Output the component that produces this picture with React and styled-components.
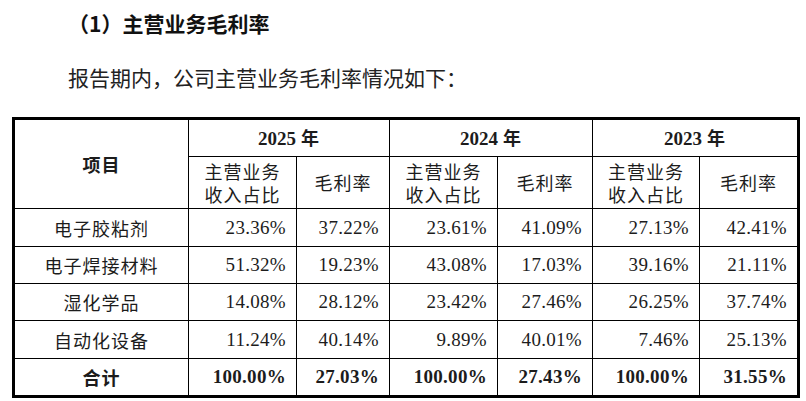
import React from "react";
import styled, { createGlobalStyle } from "styled-components";

const Global = createGlobalStyle`
  html, body { margin: 0; padding: 0; background: #fff; }
  body { font-family: "Noto Sans CJK SC", sans-serif; color: #1c1c1c; }
`;

const Page = styled.div`
  width: 806px;
  height: 401px;
  overflow: hidden;
  padding: 0 9px 0 12px;
  box-sizing: border-box;
`;

const Title = styled.h2`
  margin: 0;
  padding: 8px 0 0 56px;
  height: 46px;
  box-sizing: border-box;
  font-size: 21px;
  line-height: 30px;
  font-weight: 700;
  color: #111;
  font-family: "Noto Sans CJK SC", sans-serif;
`;

const Para = styled.p`
  margin: 0;
  padding: 16px 0 0 56px;
  height: 71px;
  box-sizing: border-box;
  font-size: 21px;
  line-height: 30px;
  font-weight: 400;
  color: #222;
`;

const Table = styled.table`
  border-collapse: collapse;
  table-layout: fixed;
  width: 785px;
  border: 3px solid #000;
`;

const Cell = styled.td`
  border: 1px solid #000;
  padding: 0 ${(p) => (p.$num ? "10px" : "0")} 0 0;
  text-align: ${(p) => (p.$num ? "right" : "center")};
  vertical-align: middle;
  font-family: ${(p) =>
    p.$num ? '"Liberation Serif", "Times New Roman", serif' : '"Noto Sans CJK SC", sans-serif'};
  font-size: ${(p) => (p.$num ? "19px" : "18px")};
  letter-spacing: ${(p) => (p.$num ? "0.3px" : "1px")};
  font-weight: ${(p) => (p.$bold ? 700 : 400)};
  line-height: 22px;
  color: #1c1c1c;
  white-space: nowrap;
`;

const Head = styled.th`
  border: 1px solid #000;
  padding: 0;
  text-align: center;
  vertical-align: middle;
  font-family: "Noto Sans CJK SC", sans-serif;
  font-size: 18px;
  letter-spacing: 1px;
  font-weight: ${(p) => (p.$bold ? 700 : 400)};
  line-height: 23px;
  color: #1c1c1c;
`;

const Line = styled.span`
  display: block;
`;

const Year = styled.span`
  font-family: "Liberation Serif", "Times New Roman", serif;
  font-size: 19px;
  letter-spacing: 0;
  font-weight: 700;
`;

const Row = styled.tr`
  height: ${(p) => p.$h}px;
`;

const rows = [
  ["电子胶粘剂", "23.36%", "37.22%", "23.61%", "41.09%", "27.13%", "42.41%"],
  ["电子焊接材料", "51.32%", "19.23%", "43.08%", "17.03%", "39.16%", "21.11%"],
  ["湿化学品", "14.08%", "28.12%", "23.42%", "27.46%", "26.25%", "37.74%"],
  ["自动化设备", "11.24%", "40.14%", "9.89%", "40.01%", "7.46%", "25.13%"],
];
const total = ["合计", "100.00%", "27.03%", "100.00%", "27.43%", "100.00%", "31.55%"];
const heights = [38, 37, 37, 38, 38];
const years = ["2025", "2024", "2023"];

export default function App() {
  return (
    <>
      <Global />
      <Page>
        <Title>（1）主营业务毛利率</Title>
        <Para>报告期内，公司主营业务毛利率情况如下：</Para>
        <Table>
          <colgroup>
            <col style={{ width: 175 }} />
            <col style={{ width: 108 }} />
            <col style={{ width: 93 }} />
            <col style={{ width: 108 }} />
            <col style={{ width: 95 }} />
            <col style={{ width: 107 }} />
            <col style={{ width: 99 }} />
          </colgroup>
          <thead>
            <Row $h={38}>
              <Head rowSpan={2} $bold>
                项目
              </Head>
              {years.map((y) => (
                <Head key={y} colSpan={2} $bold>
                  <Year>{y}</Year> 年
                </Head>
              ))}
            </Row>
            <Row $h={52}>
              {years.map((y) => (
                <React.Fragment key={y}>
                  <Head>
                    <Line>主营业务</Line>
                    <Line>收入占比</Line>
                  </Head>
                  <Head>毛利率</Head>
                </React.Fragment>
              ))}
            </Row>
          </thead>
          <tbody>
            {rows.map((r, i) => (
              <Row key={r[0]} $h={heights[i]}>
                {r.map((v, j) => (
                  <Cell key={j} $num={j > 0}>
                    {v}
                  </Cell>
                ))}
              </Row>
            ))}
            <Row $h={heights[4]}>
              {total.map((v, j) => (
                <Cell key={j} $num={j > 0} $bold>
                  {v}
                </Cell>
              ))}
            </Row>
          </tbody>
        </Table>
      </Page>
    </>
  );
}
